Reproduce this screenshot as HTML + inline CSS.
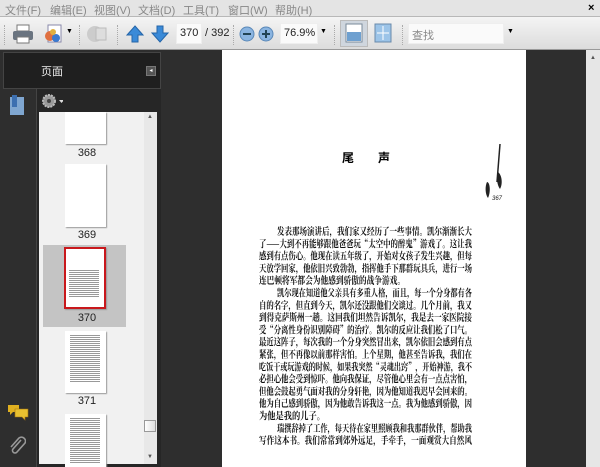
<!DOCTYPE html><html><head><meta charset="utf-8"><style>
*{margin:0;padding:0;box-sizing:border-box}
body{width:600px;height:467px;overflow:hidden;background:#2e2e2e;font-family:"Liberation Sans","Noto Sans CJK SC",sans-serif;position:relative}
.abs{position:absolute}
#menu{left:0;top:0;width:600px;height:17px;background:#e4e4e4;border-bottom:1px solid #b8b8b8;font-size:11px;color:#888}
#menu span{position:absolute;top:2px}
#tb{left:0;top:17px;width:600px;height:33px;background:linear-gradient(#f4f4f4,#dcdcdc);border-bottom:1px solid #999}
.sep{position:absolute;top:8px;width:2px;height:20px;border-left:1px dotted #aaa}
.inp{position:absolute;background:#fafafa;border:1px solid #ccc;font-size:11px;color:#222;padding:3px 3px}
.th{position:absolute;left:65px;width:41px;background:#fff;box-shadow:1px 1px 1px #999}
.tl{position:absolute;left:75px;width:24px;font-size:11px;color:#222;text-align:center}
.tx{position:absolute;background:repeating-linear-gradient(#999 0 1px,#fff 1px 2px)}
#ptext text{font-family:"Noto Serif CJK SC",serif;font-weight:bold;font-size:10px;fill:#111}
</style></head><body>
<div id="menu" class="abs">
<span style="left:5px">文件(F)</span><span style="left:50px">编辑(E)</span><span style="left:94px">视图(V)</span><span style="left:138px">文档(D)</span><span style="left:183px">工具(T)</span><span style="left:228px">窗口(W)</span><span style="left:275px">帮助(H)</span>
<span style="left:588px;color:#000;font-weight:bold">×</span>
</div>
<div id="tb" class="abs">
<div class="sep" style="left:4px"></div>
<svg class="abs" style="left:12px;top:7px" width="22" height="20"><rect x="5" y="1" width="12" height="6" fill="#fff" stroke="#777"/><rect x="1" y="7" width="20" height="9" rx="2" fill="#6a7480"/><rect x="5" y="13" width="12" height="6" fill="#fff" stroke="#777"/></svg>
<svg class="abs" style="left:42px;top:6px" width="22" height="22"><rect x="6" y="2" width="13" height="17" fill="#fff" stroke="#88a"/><circle cx="8" cy="13" r="5" fill="#e07040"/><circle cx="14" cy="15" r="4" fill="#3b7ad0"/><circle cx="11" cy="9" r="3" fill="#e0b040"/></svg>
<span class="abs" style="left:66px;top:11px;font-size:7px">▼</span>
<div class="sep" style="left:79px"></div>
<svg class="abs" style="left:86px;top:7px" width="22" height="20"><circle cx="9" cy="10" r="8" fill="#ccc"/><rect x="10" y="4" width="10" height="12" fill="#ddd" stroke="#bbb"/></svg>
<div class="sep" style="left:117px"></div>
<svg class="abs" style="left:126px;top:8px" width="18" height="18"><path d="M9 1L17 10H12V17H6V10H1Z" fill="#3a8ad8" stroke="#2565a8"/></svg>
<svg class="abs" style="left:151px;top:8px" width="18" height="18"><path d="M9 17L17 8H12V1H6V8H1Z" fill="#3a8ad8" stroke="#2565a8"/></svg>
<div class="inp" style="left:176px;top:6px;width:26px;height:21px;border-color:#eee">370</div>
<span class="abs" style="left:205px;top:10px;font-size:11px;color:#222">/ 392</span>
<div class="sep" style="left:233px"></div>
<svg class="abs" style="left:239px;top:9px" width="16" height="16"><circle cx="8" cy="8" r="7" fill="#8ab4e0" stroke="#5a88b8"/><rect x="4" y="7" width="8" height="2" fill="#245"/></svg>
<svg class="abs" style="left:258px;top:9px" width="16" height="16"><circle cx="8" cy="8" r="7" fill="#8ab4e0" stroke="#5a88b8"/><rect x="4" y="7" width="8" height="2" fill="#245"/><rect x="7" y="4" width="2" height="8" fill="#245"/></svg>
<div class="inp" style="left:280px;top:6px;width:38px;height:21px;border-color:#eee">76.9%</div>
<span class="abs" style="left:320px;top:11px;font-size:7px">▼</span>
<div class="sep" style="left:334px"></div>
<div class="abs" style="left:340px;top:3px;width:28px;height:27px;background:#cfd6de;border:1px solid #bbb"></div>
<svg class="abs" style="left:345px;top:6px" width="18" height="20"><rect x="1" y="1" width="16" height="18" fill="#fff" stroke="#7a8a9a"/><rect x="2" y="9" width="14" height="9" fill="#6ea0d0"/></svg>
<svg class="abs" style="left:374px;top:6px" width="18" height="20"><rect x="1" y="1" width="16" height="18" fill="#9cc4e8" stroke="#6a8aaa"/><path d="M9 3v14M3 10h12" stroke="#fff"/></svg>
<div class="sep" style="left:402px"></div>
<div class="inp" style="left:408px;top:6px;width:96px;height:21px;color:#888;border-color:#eee">查找</div>
<span class="abs" style="left:507px;top:11px;font-size:7px">▼</span>
</div>
<svg class="abs" style="left:8px;top:58px" width="18" height="24"><path d="M2 4h10l4 4v15H2z" fill="#eee" stroke="#999"/><path d="M0 2h10v2H2v17H0z" fill="#ccc"/></svg>
<svg class="abs" style="left:8px;top:95px" width="18" height="22"><rect x="2" y="2" width="14" height="18" fill="#7fa6d0"/><rect x="4" y="0" width="5" height="12" fill="#3c6fb0"/></svg>
<svg class="abs" style="left:7px;top:403px" width="22" height="18"><path d="M1 2h11v7H6l-3 3V9H1z" fill="#e0b020"/><path d="M8 6h13v8h-3v3l-3-3H8z" fill="#e8c030" stroke="#a07010" stroke-width=".6"/></svg>
<svg class="abs" style="left:8px;top:436px" width="18" height="20"><path d="M13 4L5 13a2.5 2.5 0 0 0 4 3l8-9a4 4 0 0 0-6-5L3 11" fill="none" stroke="#999" stroke-width="1.6"/></svg>
<div class="abs" style="left:3px;top:52px;width:158px;height:37px;background:#1f1f1f;border:1px solid #444"></div>
<span class="abs" style="left:41px;top:63px;font-size:11px;color:#eee">页面</span>
<div class="abs" style="left:146px;top:66px;width:10px;height:10px;background:#555;border:1px solid #777;font-size:6px;color:#fff;line-height:8px;text-align:center">◂</div>
<div class="abs" style="left:36px;top:89px;width:125px;height:378px;background:#262626;border-left:1px solid #444"></div>
<svg class="abs" style="left:41px;top:93px" width="22" height="16"><circle cx="8" cy="8" r="6" fill="#999" stroke="#bbb" stroke-dasharray="2 1" stroke-width="2"/><circle cx="8" cy="8" r="2" fill="#444"/><path d="M18 7h5l-2.5 3z" fill="#ddd"/></svg>
<div class="abs" style="left:39px;top:112px;width:118px;height:352px;background:#f1f1f1"></div>
<div class="abs" style="left:144px;top:112px;width:13px;height:352px;background:#e8e8e8"></div>
<span class="abs" style="left:147px;top:114px;font-size:6px;color:#555">▲</span>
<span class="abs" style="left:147px;top:454px;font-size:6px;color:#555">▼</span>
<div class="abs" style="left:144px;top:420px;width:12px;height:12px;background:linear-gradient(90deg,#fff,#ddd);border:1px solid #999"></div>
<div class="th" style="top:112px;height:32px"></div><div class="tl" style="top:147px">368</div>
<div class="th" style="top:164px;height:63px"></div><div class="tl" style="top:229px">369</div>
<div class="abs" style="left:43px;top:245px;width:83px;height:82px;background:#c4c4c4"></div>
<div class="th" style="top:247px;height:62px;border:2px solid #c8181c;left:64px;width:42px"></div>
<div class="tx" style="left:69px;top:270px;width:30px;height:28px"></div>
<div class="tl" style="top:312px">370</div>
<div class="th" style="top:331px;height:62px"></div><div class="tx" style="left:70px;top:335px;width:30px;height:48px"></div>
<div class="tl" style="top:395px">371</div>
<div class="th" style="top:414px;height:53px"></div><div class="tx" style="left:70px;top:418px;width:30px;height:46px"></div>
<div class="abs" style="left:222px;top:50px;width:304px;height:417px;background:#fff"></div>
<div class="abs" style="left:586px;top:50px;width:14px;height:417px;background:#e6e6e6"></div>
<span class="abs" style="left:590px;top:55px;font-size:6px;color:#555">▲</span>
<span class="abs" style="left:342px;top:149px;font-size:12px;font-weight:bold;font-family:'Noto Sans CJK SC',sans-serif">尾</span>
<span class="abs" style="left:378px;top:149px;font-size:12px;font-weight:bold;font-family:'Noto Sans CJK SC',sans-serif">声</span>
<svg class="abs" style="left:482px;top:142px" width="22" height="60"><path d="M18 2L15 40" stroke="#222" stroke-width="1.5"/><path d="M16 30c4 3 5 12 2 17-3-4-4-12-2-17zM5 40c3 0 4 10 1 16-3-4-3-12-1-16z" fill="#222"/><text x="10" y="58" font-size="6" font-style="italic" fill="#222">367</text></svg>
<svg id="ptext" class="abs" style="left:259px;top:220px" width="216" height="247">
<text x="18" y="15" textLength="195" lengthAdjust="spacingAndGlyphs">发表那场演讲后，我们家又经历了一些事情。凯尔渐渐长大</text>
<text x="0" y="27.3" textLength="213" lengthAdjust="spacingAndGlyphs">了——大到不再能够跟他爸爸玩“太空中的醉鬼”游戏了。这让我</text>
<text x="0" y="39.6" textLength="213" lengthAdjust="spacingAndGlyphs">感到有点伤心。他现在读五年级了，开始对女孩子发生兴趣，但每</text>
<text x="0" y="51.9" textLength="213" lengthAdjust="spacingAndGlyphs">天放学回家，他依旧兴致勃勃，指挥他手下那群玩具兵，进行一场</text>
<text x="0" y="64.2" textLength="146" lengthAdjust="spacingAndGlyphs">连巴顿将军都会为他感到骄傲的战争游戏。</text>
<text x="18" y="76.5" textLength="195" lengthAdjust="spacingAndGlyphs">凯尔现在知道他父亲具有多重人格，而且，每一个分身都有各</text>
<text x="0" y="88.8" textLength="213" lengthAdjust="spacingAndGlyphs">自的名字，但直到今天，凯尔还没跟他们交谈过。几个月前，我又</text>
<text x="0" y="101.1" textLength="213" lengthAdjust="spacingAndGlyphs">到得克萨斯州一趟。这回我们坦然告诉凯尔，我是去一家医院接</text>
<text x="0" y="113.4" textLength="213" lengthAdjust="spacingAndGlyphs">受“分离性身份识别障碍”的治疗。凯尔的反应让我们松了口气。</text>
<text x="0" y="125.7" textLength="213" lengthAdjust="spacingAndGlyphs">最近这阵子，每次我的一个分身突然冒出来，凯尔依旧会感到有点</text>
<text x="0" y="138" textLength="213" lengthAdjust="spacingAndGlyphs">紧张，但不再像以前那样害怕。上个星期，他甚至告诉我，我们在</text>
<text x="0" y="150.3" textLength="213" lengthAdjust="spacingAndGlyphs">吃饭干或玩游戏的时候，如果我突然“灵魂出窍”，开始神游，我不</text>
<text x="0" y="162.6" textLength="213" lengthAdjust="spacingAndGlyphs">必担心他会受到惊吓。他向我保证，尽管他心里会有一点点害怕，</text>
<text x="0" y="174.9" textLength="213" lengthAdjust="spacingAndGlyphs">但他会鼓起勇气面对我的分身轩艳，因为他知道我迟早会回来的。</text>
<text x="0" y="187.2" textLength="213" lengthAdjust="spacingAndGlyphs">他为自己感到骄傲，因为他敢告诉我这一点。我为他感到骄傲，因</text>
<text x="0" y="199.5" textLength="66" lengthAdjust="spacingAndGlyphs">为他是我的儿子。</text>
<text x="18" y="211.8" textLength="195" lengthAdjust="spacingAndGlyphs">瑞撰辞掉了工作，每天待在家里照顾我和我那群伙伴，帮助我</text>
<text x="0" y="224.1" textLength="213" lengthAdjust="spacingAndGlyphs">写作这本书。我们常常到郊外远足，手牵手，一面观赏大自然风</text>
</svg>
</body></html>
